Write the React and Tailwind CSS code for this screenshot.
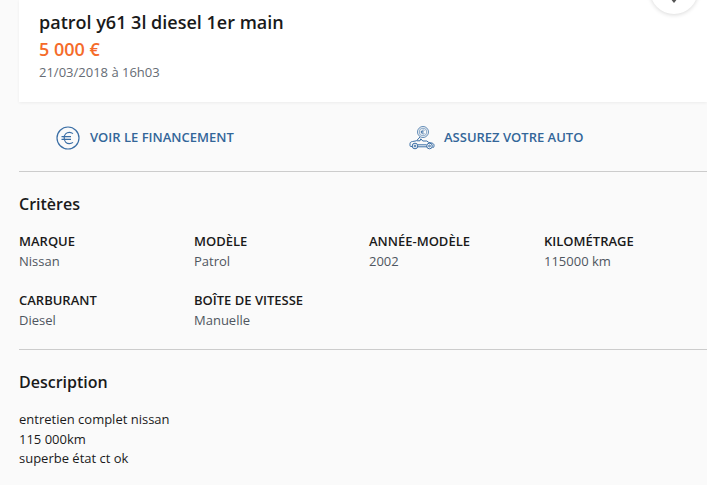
const criteres = [
  { label: 'MARQUE', value: 'Nissan' },
  { label: 'MODÈLE', value: 'Patrol' },
  { label: 'ANNÉE-MODÈLE', value: '2002' },
  { label: 'KILOMÉTRAGE', value: '115000 km' },
  { label: 'CARBURANT', value: 'Diesel' },
  { label: 'BOÎTE DE VITESSE', value: 'Manuelle' },
]

function EuroIcon() {
  return (
    <svg width="24" height="24" viewBox="0 0 24 24" fill="none" stroke="#3a6ea5" strokeWidth="1.2">
      <circle cx="12" cy="12" r="11" />
      <path d="M17 7.600a6 6 0 0 0-3.600-1.300c-3 0-5.200 2.500-5.200 5.700s2.200 5.700 5.200 5.700a6 6 0 0 0 3.600-1.300" />
      <path d="M5.500 10.600h9.500M5.500 13.400h9.500" />
    </svg>
  )
}

function CarIcon() {
  return (
    <svg width="26" height="24" viewBox="0 0 26 24" fill="none" stroke="#3a6ea5" strokeWidth="1">
      <circle cx="14" cy="6" r="5.500" strokeWidth="0.8" />
      <circle cx="14" cy="6" r="3.800" strokeWidth="0.6" />
      <path d="M15.500 4.400a2 2 0 1 0 0 3.200M11.800 5.500h2.800M11.800 6.700h2.800" strokeWidth="0.7" />
      <path d="M3 20.500H2a1 1 0 0 1-1-1v-1.800c0-1.300 1-2 2.500-2.200l4-.7 3.500-3.800M8 14.800h3l.8-2 2 2.200h4l2 1.500 3.200.6c1.200.3 2 1 2 2.100v1a1.300 1.300 0 0 1-1.500 1.300" />
      <path d="M8.500 20.800h9.500M9 18.800h8.500" />
      <circle cx="6" cy="20" r="2.800" />
      <circle cx="20.500" cy="20" r="2.800" />
      <circle cx="6" cy="20" r="0.900" />
      <circle cx="20.500" cy="20" r="0.900" />
    </svg>
  )
}

function Critere({ label, value }) {
  return (
    <div className="h-[59px]">
      <div className="text-[13px] leading-[20px] font-semibold text-[#1a1a1a]">{label}</div>
      <div className="text-[13px] leading-[20px] text-[#4f5660]">{value}</div>
    </div>
  )
}

export default function App() {
  return (
    <div className="relative h-[485px] w-[707px] overflow-hidden bg-[#fafafa] font-['Open_Sans',sans-serif]">
      <div className="ml-[19px] h-[102px] bg-white pl-5 pt-[9px] shadow-[0_1px_3px_rgba(0,0,0,0.06)]">
        <h1 className="text-[18px] leading-[26px] font-semibold text-[#1a1a1a]">patrol y61 3l diesel 1er main</h1>
        <div className="mt-[2px] text-[18px] leading-[24px] font-semibold text-[#f56b2a]">5 000 €</div>
        <div className="mt-[1px] text-[13px] leading-[20px] text-[#666c75]">21/03/2018 à 16h03</div>
      </div>

      <div className="absolute left-[650px] top-[-34px] h-12 w-12 rounded-full bg-white shadow-[0_1px_4px_rgba(0,0,0,0.15)]">
        <div className="absolute bottom-[11px] left-[20px] h-[5px] w-[8px] bg-[#555] [clip-path:polygon(0_0,100%_0,50%_100%)]"></div>
      </div>

      <div className="ml-[19px] flex h-[70px] items-center border-b border-[#cccccc] pt-[3px]">
        <div className="ml-[37px] flex w-[353px] items-center gap-[10px]">
          <EuroIcon />
          <span className="text-[13px] font-semibold text-[#336699]">VOIR LE FINANCEMENT</span>
        </div>
        <div className="flex items-center gap-[9px]">
          <CarIcon />
          <span className="text-[13px] font-semibold text-[#336699]">ASSUREZ VOTRE AUTO</span>
        </div>
      </div>

      <div className="ml-[19px] h-[178px] border-b border-[#cccccc] pt-[21px]">
        <h2 className="text-[16px] leading-[22px] font-semibold text-[#1a1a1a]">Critères</h2>
        <div className="mt-[16px] grid grid-cols-[175px_175px_175px_1fr]">
          {criteres.map((c) => (
            <Critere key={c.label} label={c.label} value={c.value} />
          ))}
        </div>
      </div>

      <div className="ml-[19px] pt-[21px]">
        <h2 className="text-[16px] leading-[22px] font-semibold text-[#1a1a1a]">Description</h2>
        <p className="mt-[17px] text-[13px] leading-[19.500px] text-[#1a1a1a]">
          entretien complet nissan<br />115 000km<br />superbe état ct ok
        </p>
      </div>
    </div>
  )
}
